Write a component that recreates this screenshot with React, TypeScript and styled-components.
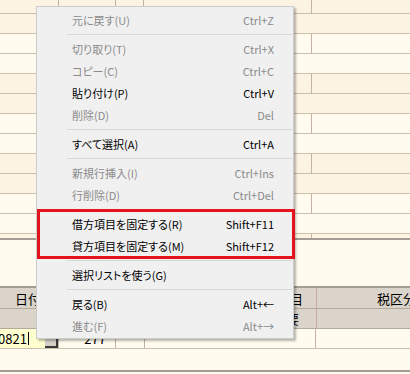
import React from "react";
import styled, { createGlobalStyle } from "styled-components";

const GlobalStyle = createGlobalStyle`
  html, body {
    margin: 0;
    padding: 0;
    overflow: hidden;
    background: #fffbee;
  }
`;

const Page = styled.div`
  position: relative;
  width: 410px;
  height: 374px;
  overflow: hidden;
  background: #fffbee;
  font-family: "Noto Sans CJK JP", "Noto Sans", sans-serif;
`;

const UpperGrid = styled.div`
  height: 238px;
  overflow: hidden;
  border-bottom: 2px solid #a39d93;
`;

const Bands = styled.div`
  margin-top: -6px;
`;

const Band = styled.div<{ $tone: "dark" | "light" }>`
  background: ${(p) => (p.$tone === "dark" ? "#fcf3e3" : "#fffbee")};
`;

const Row = styled.div`
  display: flex;
  height: 20px;
  box-sizing: border-box;
  border-bottom: 1px solid #cbbfad;
`;

const Cell = styled.div<{ $w?: number }>`
  box-sizing: border-box;
  height: 100%;
  ${(p) => (p.$w ? `width: ${p.$w}px;` : "flex: 1;")}
  border-right: 1px solid #c7b3a3;
  &:last-child {
    border-right: none;
  }
`;

const Gap = styled.div`
  height: 46px;
`;

const LowerGrid = styled.div`
  width: 420px;
  border-top: 2px solid #a39d93;
  border-bottom: 2px solid #a39d93;
  font-size: 13px;
  color: #000;
`;

const HeaderRow = styled.div<{ $h: number }>`
  display: flex;
  height: ${(p) => p.$h}px;
  box-sizing: border-box;
  background: #dad4ca;
  border-bottom: 1px solid #b3aa9c;
`;

const HeadCell = styled.div<{ $w?: number; $align?: string; $pad?: number }>`
  box-sizing: border-box;
  ${(p) => (p.$w ? `width: ${p.$w}px;` : "flex: 1;")}
  display: flex;
  align-items: center;
  justify-content: ${(p) => p.$align ?? "center"};
  padding-right: ${(p) => p.$pad ?? 0}px;
  border-right: 1px solid #c9a9a3;
  white-space: nowrap;
  line-height: 1;
  &:last-child {
    border-right: none;
  }
`;

const DataRow = styled.div`
  display: flex;
  height: 20px;
  box-sizing: border-box;
  border-bottom: 1px solid #cbbfad;
`;

const DataCell = styled.div<{ $w?: number; $pad?: number }>`
  box-sizing: border-box;
  ${(p) => (p.$w ? `width: ${p.$w}px;` : "flex: 1;")}
  display: flex;
  align-items: center;
  justify-content: flex-end;
  padding-right: ${(p) => p.$pad ?? 0}px;
  border-right: 1px solid #c7b3a3;
  line-height: 1;
  &:last-child {
    border-right: none;
  }
`;

const DateInput = styled.div`
  display: flex;
  width: 59px;
  box-sizing: border-box;
  border-right: 1px solid #c7b3a3;
`;

const InputBox = styled.div`
  flex: 1;
  display: flex;
  align-items: center;
  background: #ffffcf;
  overflow: hidden;
  line-height: 1;
`;

const InputText = styled.span`
  margin-left: -2px;
  border-right: 1px solid #000;
  padding-right: 1px;
`;

const DropButton = styled.div`
  width: 13px;
  box-sizing: border-box;
  background: #d4d0c8;
  border-right: 2px solid #3a3a3a;
  border-bottom: 2px solid #3a3a3a;
`;

const BlankRow = styled.div`
  height: 21px;
`;

const Menu = styled.div`
  position: absolute;
  left: 36px;
  top: 6px;
  width: 258px;
  box-sizing: border-box;
  padding: 2px 0 1px;
  background: #f0f0f0;
  border: 1px solid #cccccc;
  box-shadow: 2px 2px 2px rgba(0, 0, 0, 0.28);
  font-size: 11px;
  font-feature-settings: "palt";
`;

const MenuItem = styled.div<{ $disabled?: boolean }>`
  display: flex;
  align-items: center;
  justify-content: space-between;
  height: 22px;
  padding: 0 19px 0 35px;
  color: ${(p) => (p.$disabled ? "#8b8b8b" : "#000")};
  white-space: nowrap;
`;

const Shortcut = styled.span`
  font-feature-settings: normal;
`;

const Separator = styled.div`
  height: 7px;
  box-sizing: border-box;
  padding-top: 3px;
  margin: 0 1px 0 30px;
  &::after {
    content: "";
    display: block;
    border-top: 1px solid #d8d8d8;
  }
`;

const Highlight = styled.div`
  position: absolute;
  left: 37px;
  top: 209px;
  width: 258px;
  height: 50px;
  box-sizing: border-box;
  border: 3px solid #e3141c;
  pointer-events: none;
`;

type Entry = { label: string; key?: string; disabled?: boolean } | "sep";

const entries: Entry[] = [
  { label: "元に戻す(U)", key: "Ctrl+Z", disabled: true },
  "sep",
  { label: "切り取り(T)", key: "Ctrl+X", disabled: true },
  { label: "コピー(C)", key: "Ctrl+C", disabled: true },
  { label: "貼り付け(P)", key: "Ctrl+V" },
  { label: "削除(D)", key: "Del", disabled: true },
  "sep",
  { label: "すべて選択(A)", key: "Ctrl+A" },
  "sep",
  { label: "新規行挿入(I)", key: "Ctrl+Ins", disabled: true },
  { label: "行削除(D)", key: "Ctrl+Del", disabled: true },
  "sep",
  { label: "借方項目を固定する(R)", key: "Shift+F11" },
  { label: "貸方項目を固定する(M)", key: "Shift+F12" },
  "sep",
  { label: "選択リストを使う(G)" },
  "sep",
  { label: "戻る(B)", key: "Alt+←" },
  { label: "進む(F)", key: "Alt+→", disabled: true },
];

const tones: ("dark" | "light")[] = ["dark", "light", "dark", "light", "dark", "light", "dark"];

export default function App() {
  return (
    <Page>
      <GlobalStyle />
      <UpperGrid>
        <Bands>
          {tones.map((t, i) => (
            <Band key={i} $tone={t}>
              <Row>
                <Cell $w={59} />
                <Cell $w={57} />
                <Cell $w={28} />
                <Cell $w={168} />
                <Cell />
              </Row>
              <Row />
            </Band>
          ))}
        </Bands>
      </UpperGrid>
      <Gap />
      <LowerGrid>
        <HeaderRow $h={21}>
          <HeadCell $w={57}>日付</HeadCell>
          <HeadCell $w={260} $align="flex-end" $pad={13}>科目</HeadCell>
          <HeadCell $align="flex-end" $pad={4}>税区分</HeadCell>
        </HeaderRow>
        <HeaderRow $h={20}>
          <HeadCell $w={317} $align="flex-end" $pad={17}>摘要</HeadCell>
          <HeadCell />
        </HeaderRow>
        <DataRow>
          <DateInput>
            <InputBox>
              <InputText>0821</InputText>
            </InputBox>
            <DropButton />
          </DateInput>
          <DataCell $w={57} $pad={9}>277</DataCell>
          <DataCell $w={29} />
          <DataCell $w={171} />
          <DataCell />
        </DataRow>
        <BlankRow />
      </LowerGrid>

      <Menu>
        {entries.map((e, i) =>
          e === "sep" ? (
            <Separator key={i} />
          ) : (
            <MenuItem key={i} $disabled={e.disabled}>
              <span>{e.label}</span>
              {e.key && <Shortcut>{e.key}</Shortcut>}
            </MenuItem>
          )
        )}
      </Menu>
      <Highlight />
    </Page>
  );
}
